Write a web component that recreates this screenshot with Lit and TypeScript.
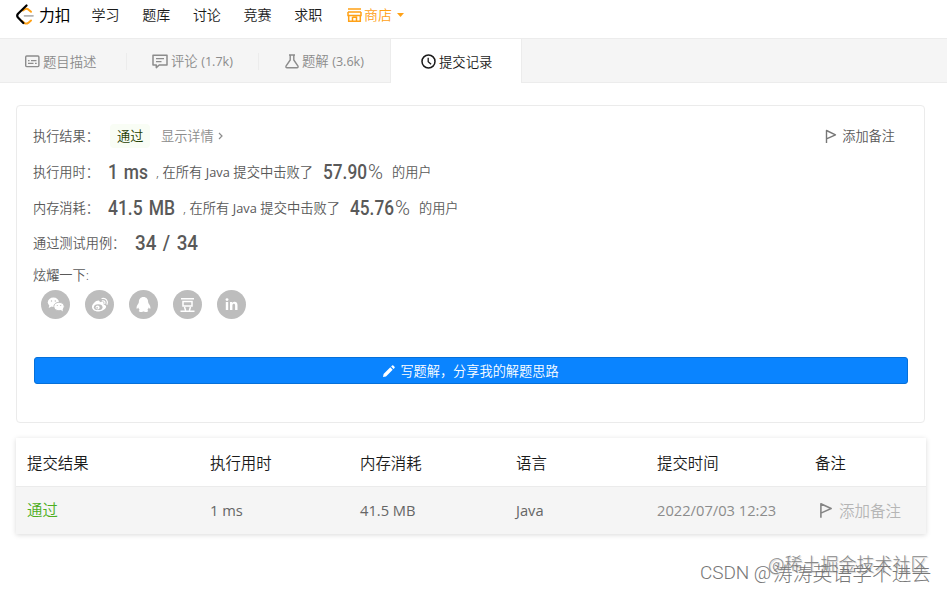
import { LitElement, html, css, svg } from "lit";
import { customElement, property } from "lit/decorators.js";

const flag = html`<svg class="flag" width="12" height="15" viewBox="0 0 12 15"><path d="M1.5 14V1.5L10.5 5.8L1.5 9.8" fill="none" stroke="currentColor" stroke-width="1.4" stroke-linejoin="round"/></svg>`;

const tabIcons: Record<string, unknown> = {
  desc: html`<svg width="15" height="13" viewBox="0 0 15 13" fill="none" stroke="currentColor"><rect x=".7" y="1" width="13.2" height="10.6" rx="1" stroke-width="1.4"/><path d="M3 5.700h1.500M6 5.700h5.500M3 8.300h5.500M10 8.300h1.700" stroke-width="1.200"/></svg>`,
  comment: html`<svg width="16" height="15" viewBox="0 0 16 15" fill="none" stroke="currentColor" stroke-linejoin="round"><path d="M1 1.200h14v9.800H7.200L4.300 13.600V11H1z" stroke-width="1.500"/><path d="M4 4.700h8M4 7.600h5.500" stroke-width="1.300"/></svg>`,
  flask: html`<svg width="14" height="15" viewBox="0 0 14 15" fill="none" stroke="currentColor" stroke-linejoin="round"><path d="M4 1h6M5.200 1v5L1 12.200Q.6 13.800 2 13.800H12Q13.400 13.800 13 12.200L8.800 6V1" stroke-width="1.400"/></svg>`,
  clock: html`<svg width="15" height="15" viewBox="0 0 15 15" fill="none" stroke="currentColor"><circle cx="7.500" cy="7.500" r="6.500" stroke-width="1.500"/><path d="M7.200 3.800v4l2.900 2.400" stroke-width="1.300"/></svg>`,
};

const social = [
  svg`<ellipse cx="12.400" cy="12.300" rx="5.600" ry="4.700"/><path d="M8.500 15l-.8 3 3-1.500z"/><ellipse cx="18" cy="16.500" rx="5.200" ry="4.200" stroke="#bdbdbd" stroke-width=".9"/><path d="M19.500 19.500l2.300 2-.2-3z"/><g fill="#bdbdbd"><circle cx="10.500" cy="11" r=".7"/><circle cx="14.300" cy="11" r=".7"/><circle cx="16.300" cy="15.500" r=".6"/><circle cx="19.700" cy="15.500" r=".6"/></g>`,
  svg`<path d="M7 17c0-3 4.500-7 7-6.300 1.200.4.800 1.700.8 1.700s3-1.300 3.700 0c.5.900-.1 1.800-.1 1.800 6.600 2-.3 7.500-5.400 7.300C9.700 21.400 7 19.600 7 17z"/><ellipse cx="13.200" cy="17.200" rx="4.300" ry="2.900" fill="#bdbdbd"/><circle cx="12.600" cy="17.500" r="2"/><circle cx="12.100" cy="17.900" r=".8" fill="#bdbdbd"/><path d="M17 8.500c4-.9 6.300 2.400 5 5.800M17.400 10.900c2-.4 3 .8 2.400 2.600" fill="none" stroke="#fff" stroke-width="1.200" stroke-linecap="round"/>`,
  svg`<path d="M14.500 7c-3 0-4.700 2.200-4.600 5 0 1.500-2.400 3.200-2.400 6 0 1.300.9.800 1.800-.5.200 1.100.8 1.900 1.500 2.400-2 .9-.8 2 1.200 2 1.400 0 2.100-.5 2.500-.5s1.100.5 2.500.5c2 0 3.200-1.100 1.200-2 .7-.5 1.300-1.300 1.500-2.400.9 1.300 1.800 1.800 1.800.5 0-2.800-2.400-4.500-2.400-6 .1-2.800-1.600-5-4.600-5z"/>`,
  svg`<path d="M8 8.700h13M10 11.500h9v4.600h-9zM11.500 17l1.100 3.500M17.500 17l-1.100 3.500M7.500 21.300h14" fill="none" stroke="#fff" stroke-width="1.500"/>`,
  svg`<circle cx="10" cy="9.600" r="1.400"/><path d="M8.800 12h2.400v8H8.800zM13 12h2.300v1.100c1.400-2 5.200-1.800 5.200 1.900v5h-2.400v-4.600c0-2.200-2.700-2-2.700.1V20H13z"/>`,
];

@customElement("din-value")
class DinValue extends LitElement {
  @property() text = "";
  @property({ type: Number }) size = 44;
  @property({ type: Boolean }) percent = false;
  static styles = css`
    :host { display: block; flex: none; height: 24px; }
    svg { display: block; overflow: visible; }
    text { font-family: Roboto, sans-serif; font-size: 21px; font-weight: 500; fill: #595959; word-spacing: 2px; }
    .pct { font-weight: 300; }
  `;
  render() {
    return html`<svg width=${this.size + (this.percent ? 16 : 0)} height="24">
      <text x="0" y="19" textLength=${this.size} lengthAdjust="spacingAndGlyphs">${this.text}</text>
      ${this.percent ? svg`<text class="pct" x=${this.size + 1} y="19" textLength="15" lengthAdjust="spacingAndGlyphs">%</text>` : null}
    </svg>`;
  }
}

@customElement("app-root")
class AppRoot extends LitElement {
  static styles = css`
    :host { display: block; position: relative; width: 947px; height: 592px; overflow: hidden; background: #fff;
      font-family: "Noto Sans", "Noto Sans CJK SC", sans-serif; font-size: 13.2px; font-weight: 350; line-height: 20px; color: #595959; white-space: nowrap; }
    * { box-sizing: border-box; }
    svg { display: block; flex: none; }
    .latin { font-weight: 400; font-family: "Open Sans", sans-serif; }
    .nav { display: flex; height: 38px; padding: 5px 0 0 16px; color: #1a1a1a; font-size: 14px; }
    .logo { width: 20px; margin-top: -1px; }
    .brand { width: 55.500px; padding-left: 3px; font-size: 15.800px; font-weight: 400; color: #000; }
    .item { width: 50.700px; }
    .shop { display: flex; color: #ffa116; padding-left: 2px; }
    .shop .store { margin: 3px 2px 0 0; }
    .shop .caret { margin: 8px 0 0 5px; }
    .tabs { display: flex; height: 45px; background: #f5f5f5; border-top: 1px solid #ececec; border-bottom: 1px solid #ececec; }
    .tab { display: flex; align-items: center; width: 132px; height: 44px; gap: 3px; color: #8c8c8c; position: relative; }
    .tab:nth-child(1) { width: 127px; padding-left: 25px; }
    .tab:nth-child(2) { padding-left: 25px; }
    .tab:nth-child(3) { width: 131px; padding-left: 26px; }
    .tab + .tab::before { content: ""; position: absolute; left: -1px; top: 14px; width: 1px; height: 17px; background: #ececec; }
    .tab.active { width: 132px; padding-left: 30px; background: #fff; color: #1a1a1a; border-left: 1px solid #ececec; border-right: 1px solid #ececec; }
    .tab.active::before { display: none; }
    .label { padding-top: 1px; font-size: 13.350px; }
    .label .latin { font-size: 12.600px; }
    .card { width: 909px; height: 318px; margin: 22px 0 0 16px; border: 1px solid #ebebeb; border-radius: 4px; padding: 18px 16px 0 16px; }
    .row { display: flex; height: 24px; align-items: center; margin-bottom: 12px; }
    .row.tight { margin-bottom: 11px; }
    .key { width: 75px; }
    .key.wide { width: 102px; }
    .badge { width: 40px; height: 24px; line-height: 24px; padding-left: 7px; margin: 0 11px 0 2px; border-radius: 4px; background: #f9fdf5; color: #1f3d00; }
    .detail { display: flex; align-items: center; gap: 4px; color: #8c8c8c; }
    .note { display: flex; gap: 5px; align-items: center; margin-left: auto; margin-right: 13px; }
    .note .flag { color: #777; }
    .beat { width: 158px; margin-right: 9px; margin-left: 8px; font-size: 13.300px; }
    .beat .latin { font-size: 12.800px; }
    .users { margin-left: 9px; }
    .row.cases { margin-bottom: 10px; }
    .row.brag { height: 20px; margin: 0; }
    .social { display: flex; gap: 15px; padding: 5px 0 0 8px; }
    .social svg { fill: #fff; }
    .write { display: flex; align-items: center; justify-content: center; gap: 5px; width: 874px; height: 27px; margin: 38px 0 0 1px; padding: 0; border: 1px solid #0670d9; border-radius: 3px; background: #0a84ff; color: #fff; font: inherit; }
    .table { width: 910px; margin: 15px 0 0 16px; font-size: 15.400px; box-shadow: 0 1px 5px rgba(0,0,0,.15); }
    .tr { display: grid; grid-template-columns: 183px 150px 156px 141px 158px 1fr; align-items: center; padding-left: 11px; height: 47px; }
    .th { height: 49px; color: #1a1a1a; padding-top: 3px; border-bottom: 1px solid #ebebeb; background: #fff; }
    .td { background: #f5f5f5; font-size: 14.700px; color: #666; }
    .td .latin { margin-top: -1px; }
    .pass { color: #4cae20; font-size: 15.400px; }
    .time { color: #8c8c8c; }
    .memo { display: flex; align-items: center; gap: 6px; padding-left: 4px; color: #b5b5b5; font-size: 15.500px; }
    .memo .flag { color: #858585; width: 14px; height: 17px; }
    .mark { position: absolute; font-weight: 300; line-height: 26px; }
    .juejin { left: 768px; top: 550px; font-size: 18px; color: #888; text-shadow: 1px 1px 1px #ccc; font-family: "Noto Sans CJK SC", sans-serif; }
    .csdn { left: 700px; top: 560px; display: flex; font-size: 19.800px; color: #777; font-family: "Noto Sans CJK SC", sans-serif; }
    .csdn .en { width: 73px; font-family: Roboto, sans-serif; font-size: 19px; letter-spacing: -.1px; }
  `;

  stat(label: string, value: string, width: number, pct: string) {
    return html`<div class="row ${label.startsWith("内") ? "tight" : ""}">
      <span class="key">${label}：</span><din-value .text=${value} .size=${width}></din-value>
      <span class="beat">, 在所有 <span class="latin">Java</span> 提交中击败了</span>
      <din-value .text=${pct} .size=${44} percent></din-value><span class="users">的用户</span>
    </div>`;
  }

  tab(icon: string, label: string, count = "", active = false) {
    return html`<div class="tab ${active ? "active" : ""}">${tabIcons[icon]}<span class="label">${label}${count ? html` <span class="latin">${count}</span>` : null}</span></div>`;
  }

  render() {
    return html`
      <div class="nav">
        <svg class="logo" width="20" height="22" viewBox="0 0 20 22" fill="none" stroke-linecap="round" stroke-linejoin="round">
          <path d="M7 6.500l2-1.300q1.700-1 3.300.2L15 7.800M6 17l2.500 2.100q1.900 1.100 3.700-.2l2.800-2.400" stroke="#ffa116" stroke-width="2"/>
          <path d="M8.500 11.800h8.500" stroke="#b3b3b3" stroke-width="1.700"/>
          <path d="M10.500 1.500L2 9.700q-1.600 2 0 3.900L7.300 19" stroke="#000" stroke-width="2.200"/>
        </svg>
        <span class="brand">力扣</span>
        ${["学习", "题库", "讨论", "竞赛", "求职"].map((t) => html`<span class="item">${t}</span>`)}
        <span class="shop">
          <svg class="store" width="15" height="14" viewBox="0 0 15 14" fill="none" stroke="currentColor" stroke-width="1.500"><path d="M1 1h13M1 4h13M1 4v3.500h13V4M1.700 7.500v5.700h11.600V7.500M5.500 9v4M5.500 9.300h4V13"/></svg>
          商店
          <svg class="caret" width="7" height="4" viewBox="0 0 7 4"><path d="M0 0h7L3.500 4z" fill="currentColor"/></svg>
        </span>
      </div>
      <div class="tabs">
        ${this.tab("desc", "题目描述")}${this.tab("comment", "评论", "(1.7k)")}${this.tab("flask", "题解", "(3.6k)")}${this.tab("clock", "提交记录", "", true)}
      </div>
      <div class="card">
        <div class="row">
          <span class="key">执行结果：</span><span class="badge">通过</span>
          <span class="detail">显示详情<svg width="5" height="8" viewBox="0 0 5 8"><path d="M1 1l3 3-3 3" fill="none" stroke="currentColor" stroke-width="1.200"/></svg></span>
          <span class="note">${flag}添加备注</span>
        </div>
        ${this.stat("执行用时", "1 ms", 40, "57.90")}
        ${this.stat("内存消耗", "41.5 MB", 67, "45.76")}
        <div class="row cases"><span class="key wide">通过测试用例：</span><din-value .text=${"34 / 34"} .size=${63}></din-value></div>
        <div class="row brag">炫耀一下:</div>
        <div class="social">
          ${social.map((g) => html`<svg width="29" height="29" viewBox="0 0 29 29"><circle cx="14.500" cy="14.500" r="14.500" fill="#bdbdbd"/>${g}</svg>`)}
        </div>
        <button class="write">
          <svg width="12" height="12" viewBox="0 0 12 12" fill="#fff"><path d="M0 12l.6-3L7.300 2.300l2.400 2.400L3 11.400zM8.100 1.500l1-1q.6-.6 1.200 0l1.200 1.200q.6.600 0 1.200l-1 1z"/></svg>
          <span>写题解，分享我的解题思路</span>
        </button>
      </div>
      <div class="table">
        <div class="tr th">${["提交结果", "执行用时", "内存消耗", "语言", "提交时间", "备注"].map((t) => html`<span>${t}</span>`)}</div>
        <div class="tr td"><span class="pass">通过</span><span class="latin">1 ms</span><span class="latin">41.5 MB</span><span class="latin">Java</span><span class="time latin">2022/07/03 12:23</span><span class="memo">${flag}添加备注</span></div>
      </div>
      <div class="mark juejin">@稀土掘金技术社区</div>
      <div class="mark csdn"><span class="en">CSDN @</span><span>涛涛英语学不进去</span></div>
    `;
  }
}
